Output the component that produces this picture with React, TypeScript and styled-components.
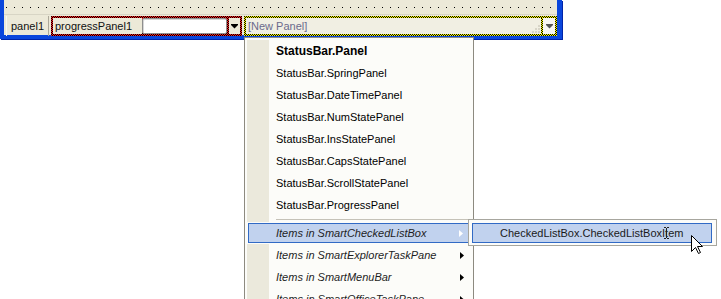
import React from 'react';
import styled, { createGlobalStyle } from 'styled-components';

const Global = createGlobalStyle`
  html, body { margin: 0; padding: 0; background: #ffffff; }
  body { font-family: "Liberation Sans", Arial, sans-serif; font-size: 11px; color: #000; }
`;

const Page = styled.div`
  position: relative;
  width: 721px;
  height: 299px;
  overflow: hidden;
  background: #fff;
`;

const Window = styled.div`
  width: 553px;
  border-left: 4px solid #0a46dc;
  border-right: 5px solid #0a46dc;
  border-bottom: 4px solid #0a46dc;
  box-shadow: 1px 1px 0 #0024a8;
  background: #ece9d8;
`;

const Canvas = styled.div`
  height: 14px;
  padding-top: 7px;
  box-sizing: border-box;
  background: #ece9d8;
`;

const DotRow = styled.div`
  height: 1px;
  background: repeating-linear-gradient(
    to right,
    transparent 0 2px,
    #000 2px 3px,
    transparent 3px 8px
  );
`;

const StatusBar = styled.div`
  height: 21px;
  box-sizing: border-box;
  border-top: 1px solid #d8d5c5;
  padding: 1px 0 0 2px;
  display: flex;
  gap: 2px;
  background: #ece9d8;
`;

const PlainPanel = styled.div`
  width: 43px;
  height: 20px;
  box-sizing: border-box;
  border-left: 1px solid #f8f7f2;
  border-right: 1px solid #aca899;
  padding-left: 4px;
  display: flex;
  align-items: center;
  font-size: 11px;
  color: #111;
`;

const Checker = styled.div<{ $c: string; $w?: number }>`
  height: 20px;
  box-sizing: border-box;
  padding: 2px;
  ${p => (p.$w ? `width: ${p.$w}px;` : 'flex: 1;')}
  display: flex;
  background: repeating-conic-gradient(${p => p.$c} 0% 25%, #000 0% 50%) 0 0 / 2px 2px;
`;

const SepBar = styled.div<{ $c: string }>`
  width: 2px;
  align-self: stretch;
  background: repeating-conic-gradient(${p => p.$c} 0% 25%, #000 0% 50%) 0 0 / 2px 2px;
`;

const PanelLabel = styled.div<{ $w?: number; $bg: string; $color: string }>`
  ${p => (p.$w ? `width: ${p.$w}px;` : 'flex: 1;')}
  background: ${p => p.$bg};
  color: ${p => p.$color};
  display: flex;
  align-items: center;
  justify-content: space-between;
  padding-left: 2px;
  box-sizing: border-box;
  font-size: 11px;
`;

const InputBox = styled.div`
  width: 85px;
  box-sizing: border-box;
  background: #fff;
  border: 1px solid #8e8e8e;
  border-radius: 2px;
  box-shadow: inset 1px 1px 0 #d6d6d6;
`;

const DropBtn = styled.div<{ $w: number; $bg: string }>`
  width: ${p => p.$w}px;
  background: ${p => p.$bg};
  display: flex;
  align-items: center;
  justify-content: center;
`;

const Grip = styled.svg`
  align-self: flex-end;
  margin-bottom: 1px;
  margin-right: 1px;
`;

const Menu = styled.div`
  position: absolute;
  left: 244px;
  top: 37px;
  width: 230px;
  height: 280px;
  box-sizing: border-box;
  border: 1px solid #8d8a80;
  background: #fcfcf9;
  padding: 2px 2px 0 2px;
  display: flex;
  flex-direction: column;
`;

const Item = styled.div<{ $active?: boolean }>`
  height: 22px;
  box-sizing: border-box;
  display: flex;
  align-items: center;
  ${p =>
    p.$active
      ? `
    margin: 1px 0 1px 1px;
    border: 1px solid #316ac5;
    background: #c1d2ee;
    height: 20px;
  `
      : ''}
`;

const Gutter = styled.div<{ $active?: boolean }>`
  width: ${p => (p.$active ? 20 : 22)}px;
  align-self: stretch;
  background: ${p => (p.$active ? 'transparent' : '#ebe9dc')};
  flex-shrink: 0;
`;

const ItemText = styled.span<{ $kind?: 'bold' | 'italic' }>`
  padding-left: 7px;
  white-space: nowrap;
  font-size: ${p => (p.$kind === 'bold' ? '12px' : '11px')};
  font-weight: ${p => (p.$kind === 'bold' ? 700 : 400)};
  font-style: ${p => (p.$kind === 'italic' ? 'italic' : 'normal')};
  color: ${p => (p.$kind === 'italic' ? '#1e1e1e' : '#000')};
`;

const SubArrow = styled.svg`
  margin-left: auto;
  margin-right: 7px;
  flex-shrink: 0;
`;

const SepRow = styled.div`
  height: 6px;
  display: flex;
`;

const SepLine = styled.div`
  flex: 1;
  margin-left: 7px;
  align-self: center;
  height: 1px;
  background: #c5c2b8;
`;

const SubMenu = styled.div`
  position: absolute;
  left: 468px;
  top: 219px;
  width: 249px;
  height: 27px;
  box-sizing: border-box;
  border: 1px solid #a7a69e;
  background: #fcfcf9;
  padding: 3px 4px 2px 3px;
`;

const SubItem = styled.div`
  height: 20px;
  box-sizing: border-box;
  border: 1px solid #316ac5;
  background: #c1d2ee;
  display: flex;
  align-items: center;
  padding-left: 27px;
  font-size: 11px;
  color: #1a1a1a;
  white-space: nowrap;
`;

const Cursor = styled.svg`
  position: absolute;
  left: 691px;
  top: 235px;
`;

const IBeam = styled.svg`
  position: absolute;
  left: 664px;
  top: 227px;
`;

const DownArrow = ({ color }: { color: string }) => (
  <svg width="7" height="5" viewBox="0 0 7 5">
    <rect x="0" y="0" width="7" height="1" fill={color} />
    <path d="M0 1 H7 L3.5 4.5 Z" fill={color} />
  </svg>
);

const RightArrow = ({ color }: { color: string }) => (
  <SubArrow width="4" height="7" viewBox="0 0 4 7">
    <path d="M0 0 L4 3.5 L0 7 Z" fill={color} />
  </SubArrow>
);

const plainItems = [
  'StatusBar.SpringPanel',
  'StatusBar.DateTimePanel',
  'StatusBar.NumStatePanel',
  'StatusBar.InsStatePanel',
  'StatusBar.CapsStatePanel',
  'StatusBar.ScrollStatePanel',
  'StatusBar.ProgressPanel',
];

const smartItems = [
  'Items in SmartExplorerTaskPane',
  'Items in SmartMenuBar',
  'Items in SmartOfficeTaskPane',
];

export default function App() {
  return (
    <Page>
      <Global />
      <Window>
        <Canvas>
          <DotRow />
        </Canvas>
        <StatusBar>
          <PlainPanel>panel1</PlainPanel>
          <Checker $c="#ff1a1a" $w={191}>
            <PanelLabel $w={89} $bg="#ece9d8" $color="#111">progressPanel1</PanelLabel>
            <InputBox />
            <SepBar $c="#ff1a1a" />
            <DropBtn $w={11} $bg="#ece9d8">
              <DownArrow color="#000" />
            </DropBtn>
          </Checker>
          <Checker $c="#ffff00">
            <PanelLabel $bg="#f1efe3" $color="#6a6a8c">
              <span>[New Panel]</span>
              <Grip width="8" height="8" viewBox="0 0 8 8">
                <rect x="6" y="0" width="2" height="2" fill="#d8d5c8" />
                <rect x="3" y="3" width="2" height="2" fill="#d8d5c8" />
                <rect x="6" y="3" width="2" height="2" fill="#d8d5c8" />
                <rect x="0" y="6" width="2" height="2" fill="#d8d5c8" />
                <rect x="3" y="6" width="2" height="2" fill="#d8d5c8" />
                <rect x="6" y="6" width="2" height="2" fill="#d8d5c8" />
              </Grip>
            </PanelLabel>
            <SepBar $c="#ffff00" />
            <DropBtn $w={12} $bg="#f7f6f1">
              <DownArrow color="#555" />
            </DropBtn>
          </Checker>
        </StatusBar>
      </Window>

      <Menu>
        <Item>
          <Gutter />
          <ItemText $kind="bold">StatusBar.Panel</ItemText>
        </Item>
        {plainItems.map(t => (
          <Item key={t}>
            <Gutter />
            <ItemText>{t}</ItemText>
          </Item>
        ))}
        <SepRow>
          <Gutter />
          <SepLine />
        </SepRow>
        <Item $active>
          <Gutter $active />
          <ItemText $kind="italic">Items in SmartCheckedListBox</ItemText>
          <RightArrow color="#fff" />
        </Item>
        {smartItems.map(t => (
          <Item key={t}>
            <Gutter />
            <ItemText $kind="italic">{t}</ItemText>
            <RightArrow color="#000" />
          </Item>
        ))}
      </Menu>

      <SubMenu>
        <SubItem>CheckedListBox.CheckedListBoxItem</SubItem>
      </SubMenu>

      <IBeam width="5" height="12" viewBox="0 0 5 12">
        <path d="M0 0.5 H2 M3 0.5 H5 M2.5 1 V11 M0 11.5 H2 M3 11.5 H5" stroke="#222" strokeWidth="1" fill="none" />
      </IBeam>

      <Cursor width="13" height="20" viewBox="0 0 13 20">
        <path
          d="M0.5 0.5 L0.5 16.5 L4.5 12.5 L7.5 18.5 L9.5 17.5 L6.5 11.5 L11.5 11.5 Z"
          fill="#fff"
          stroke="#000"
          strokeWidth="1"
          strokeLinejoin="miter"
        />
      </Cursor>
    </Page>
  );
}
